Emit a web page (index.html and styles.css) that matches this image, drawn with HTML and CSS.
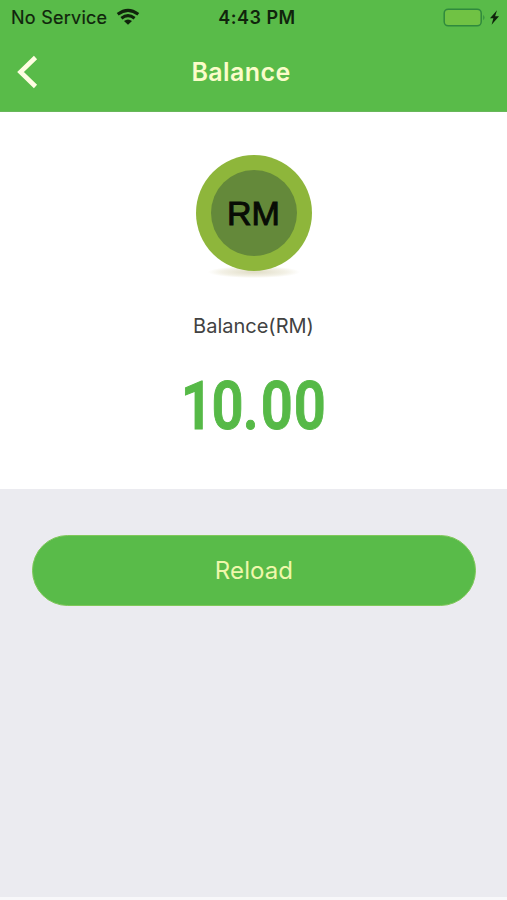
FILE: index.html
```html
<!DOCTYPE html>
<html lang="en">
<head>
<meta charset="utf-8">
<title>Balance</title>
<link rel="stylesheet" href="styles.css">
</head>
<body>
<header class="header">
  <div class="status">
    <div class="carrier">
      <span class="carrier-name">No Service</span>
      <svg class="wifi" width="24" height="18" viewBox="0 0 24 18" fill="none" stroke="#10240c" stroke-width="3">
        <path d="M1.7 6.3Q12-1.6 22.3 6.3"/>
        <path d="M5.4 10.2Q12 5 18.6 10.2"/>
        <path d="M12 16.8L8 12.9Q12 9.9 16 12.9Z" fill="#10240c" stroke="none"/>
      </svg>
    </div>
    <span class="time">4:43 PM</span>
    <div class="power">
      <svg width="58" height="20" viewBox="0 0 58 20">
        <rect x="2.2" y="1.2" width="37" height="16.6" rx="4" fill="#70c244" stroke="#2f8a3d" stroke-width="1.5"/>
        <path d="M41.3 6.7q2.3 2.8 0 5.6z" fill="#2f8a3d"/>
        <path d="M55 2.2L48 10.3H51.4L49.6 16.8L57 8.2H53.1Z" fill="#10240c"/>
      </svg>
    </div>
  </div>
  <nav class="nav">
    <svg class="back" width="22" height="34" viewBox="0 0 22 34" fill="none" stroke="#fffde2" stroke-width="4.6">
      <path d="M18.5 2.5L3.5 17L18.5 31.5"/>
    </svg>
    <h1 class="title">Balance</h1>
  </nav>
</header>
<main class="main">
  <section class="summary">
    <div class="coin-wrap">
      <div class="coin"><div class="coin-core"><span>RM</span></div></div>
    </div>
    <p class="label">Balance(RM)</p>
    <svg class="amount" width="170" height="84" viewBox="-10 -12 170 84">
      <text transform="scale(.84 1)" y="52.5" x="2.2 38.8 75.8 97.3 136.7">10.00</text>
    </svg>
  </section>
  <section class="actions">
    <button class="reload" type="button"><span>Reload</span></button>
  </section>
</main>
</body>
</html>
```

FILE: styles.css
```css
* { box-sizing: border-box; }

body {
  margin: 0;
  height: 900px;
  display: flex;
  flex-direction: column;
  background: #ebebf0;
  font-family: Inter, "Liberation Sans", sans-serif;
  overflow: hidden;
}

.header {
  height: 112px;
  flex: none;
  background: #59bb49;
  border-bottom: 1px solid #68b75a;
}

.status {
  display: grid;
  grid-template-columns: 1fr auto 1fr;
  align-items: center;
  height: 35px;
  padding: 0 7px 0 11px;
  color: #10240c;
  font-size: 18px;
  line-height: 35px;
}

.carrier { display: flex; align-items: center; gap: 9px; }
.carrier-name { letter-spacing: 0.25px; white-space: nowrap; -webkit-text-stroke: 0.2px #10240c; }
.wifi { margin-top: -2px; }
.time { font-weight: 600; letter-spacing: 0.5px; margin-left: 3px; }
.power { display: flex; justify-content: flex-end; }

.nav {
  display: grid;
  grid-template-columns: 46px 1fr 46px;
  align-items: center;
  height: 74px;
  padding: 0 17px;
}

.title {
  margin: 0;
  padding-right: 25px;
  text-align: center;
  color: #fbfcc9;
  font-size: 25px;
  font-weight: 600;
  letter-spacing: 0.4px;
}

.main {
  flex: 1;
  border-bottom: 3px solid #f8f8fa;
}

.summary {
  height: 377px;
  display: flex;
  flex-direction: column;
  align-items: center;
  padding-top: 43px;
  background: #fff;
}

.coin-wrap {
  height: 124px;
  width: 116px;
  background: radial-gradient(ellipse 46px 6px at 58px 117px, #e0dcc6, #f3f1e6 70%, transparent 100%);
}

.coin, .coin-core {
  display: flex;
  align-items: center;
  justify-content: center;
  border-radius: 50%;
}

.coin { width: 116px; height: 116px; background: #8eb63b; }

.coin-core {
  width: 86px;
  height: 86px;
  background: #64893a;
  color: #080c05;
  font: 34px "Liberation Sans", sans-serif;
  -webkit-text-stroke: 1px #080c05;
}

.label {
  margin: 35px 0 0;
  color: #424242;
  font-size: 20px;
  line-height: 24px;
}

.amount {
  margin: 26px 0 0 0;
  flex: none;
  fill: #56b947;
  stroke: #56b947;
  stroke-width: 1;
  font-family: Roboto, sans-serif;
  font-size: 67px;
  font-weight: 600;
}

.actions { padding: 46px 31px 0 32px; }

.reload {
  display: block;
  width: 100%;
  height: 71px;
  padding: 0;
  border: 1px solid #7fc85a;
  border-radius: 36px;
  background: #59bb49;
  color: #eff7ab;
  font: 24px Inter, sans-serif;
  letter-spacing: 0.1px;
}
```
